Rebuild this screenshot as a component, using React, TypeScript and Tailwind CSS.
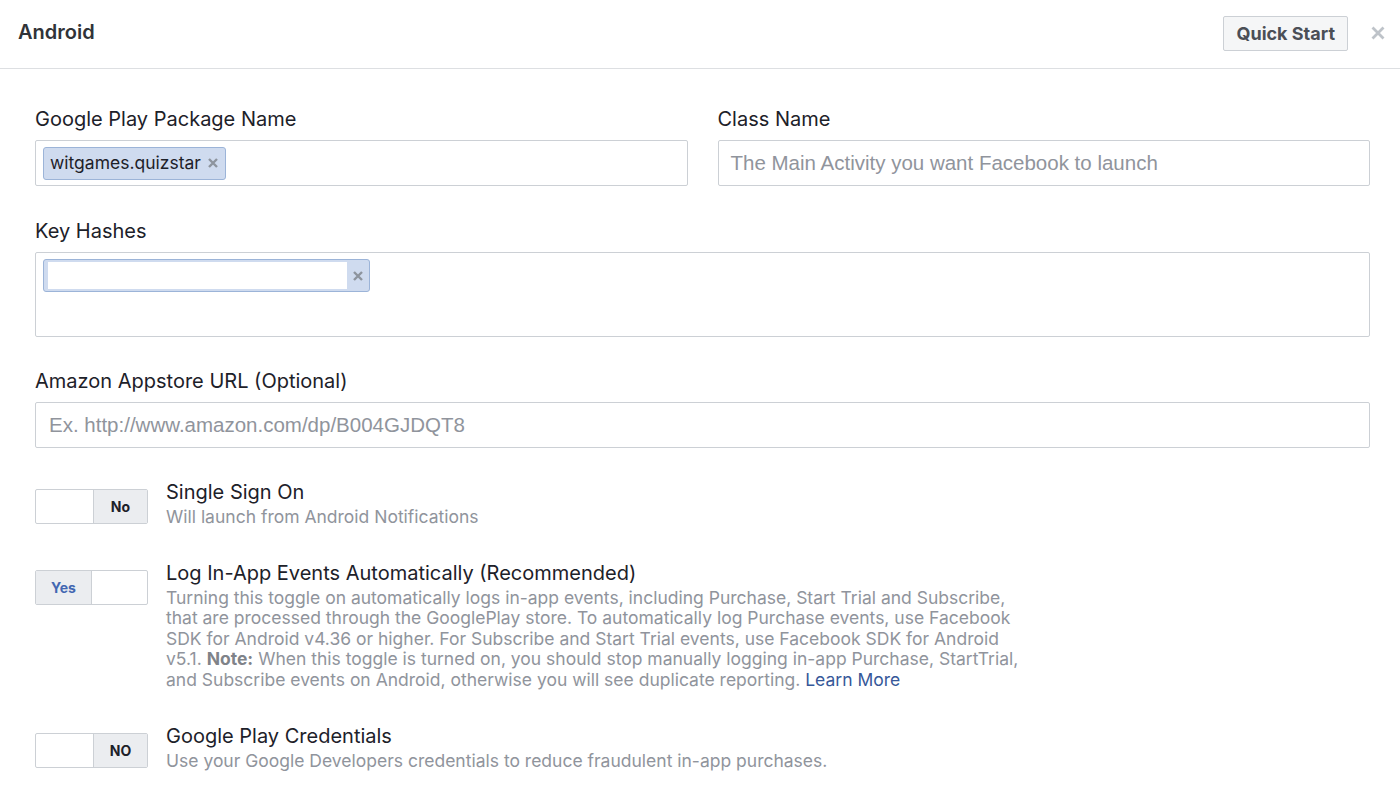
import React from "react";

const ui = "font-['Inter','Noto_Sans',sans-serif]";
const helv = "font-['Liberation_Sans','Arial',sans-serif]";

function Label({ children }: { children: React.ReactNode }) {
  return <div className={`text-[20px] leading-[24px] text-[#1d2129] mb-[9px] ${ui}`}>{children}</div>;
}

function SmallX() {
  return (
    <svg viewBox="0 0 12 12" width="12" height="12" className="text-[#8d949e]">
      <path d="M2 2 L10 10 M10 2 L2 10" stroke="currentColor" strokeWidth="2.4" />
    </svg>
  );
}

function Toggle({ on, label }: { on: boolean; label: string }) {
  return (
    <div className="flex w-[113px] h-[35px] shrink-0 border border-[#ccd0d5] rounded-[2px] overflow-hidden bg-white">
      {on ? (
        <>
          <div className={`w-[56px] flex items-center justify-center bg-[#ebedf0] border-r border-[#ccd0d5] text-[14px] font-bold text-[#4267b2] ${ui}`}>
            {label}
          </div>
          <div className="flex-1" />
        </>
      ) : (
        <>
          <div className="w-[58px] border-r border-[#ccd0d5]" />
          <div className={`flex-1 flex items-center justify-center bg-[#ebedf0] text-[14px] font-bold text-[#1d2129] ${ui}`}>
            {label}
          </div>
        </>
      )}
    </div>
  );
}

function Setting({
  on,
  label,
  title,
  children,
}: {
  on: boolean;
  label: string;
  title: string;
  children: React.ReactNode;
}) {
  return (
    <div className="flex items-start gap-[18px]">
      <Toggle on={on} label={label} />
      <div className={`${ui} -mt-[12px]`}>
        <div className="text-[20px] leading-[30px] text-[#1d2129]">{title}</div>
        <div className="text-[17.5px] leading-[20.6px] text-[#90949c] max-w-[870px]">{children}</div>
      </div>
    </div>
  );
}

export default function App() {
  return (
    <div className="w-[1400px] h-[797px] bg-white overflow-hidden">
      <div className="h-[69px] border-b border-[#dddfe2] flex items-center pl-[18px] pr-[12px]">
        <div className={`text-[20px] font-semibold text-[#303338] flex-1 -mt-[4px] ${ui}`}>Android</div>
        <button
          className={`h-[35px] px-[12px] border border-[#ccd0d5] bg-[#f5f6f7] rounded-[2px] text-[18px] font-bold text-[#4b4f56] -mt-[2px] ml-[1px] ${ui}`}
        >
          Quick Start
        </button>
        <div className="w-[18px] ml-[22px] -mt-[2px] text-[#bec3c9]">
          <svg viewBox="0 0 16 16" width="16" height="16">
            <path d="M2.5 2.5 L13.5 13.5 M13.5 2.5 L2.5 13.5" stroke="currentColor" strokeWidth="2.8" />
          </svg>
        </div>
      </div>

      <div className="px-[35px] pr-[30px] pt-[38px]">
        <div className="grid grid-cols-2 gap-x-[30px]">
          <div>
            <Label>Google Play Package Name</Label>
            <div className="h-[46px] border border-[#ccd0d5] rounded-[2px] flex items-center px-[7px]">
              <div className="h-[33px] flex items-center gap-[6px] pl-[6px] pr-[6px] bg-[#cfdbef] border border-[#9cb4d8] rounded-[3px]">
                <span className={`text-[17.5px] text-[#1d2129] ${ui}`}>witgames.quizstar</span>
                <SmallX />
              </div>
            </div>
          </div>
          <div>
            <Label>Class Name</Label>
            <div className="h-[46px] border border-[#ccd0d5] rounded-[2px] flex items-center px-[12px]">
              <span className={`text-[20.5px] text-[#90949c] ${helv}`}>The Main Activity you want Facebook to launch</span>
            </div>
          </div>
        </div>

        <div className="mt-[33px]">
          <Label>Key Hashes</Label>
          <div className="h-[85px] border border-[#ccd0d5] rounded-[2px] px-[7px] pt-[6px]">
            <div className="w-[327px] h-[33px] flex border border-[#9cb4d8] rounded-[3px] bg-[#cfdbef] overflow-hidden">
              <div className="flex-1 bg-white ml-[4px] my-[2px]" />
              <div className="w-[22px] flex items-center justify-center">
                <SmallX />
              </div>
            </div>
          </div>
        </div>

        <div className="mt-[32px]">
          <Label>Amazon Appstore URL (Optional)</Label>
          <div className="h-[46px] border border-[#ccd0d5] rounded-[2px] flex items-center px-[13px]">
            <span className={`text-[20.5px] text-[#90949c] ${helv}`}>Ex. http://www.amazon.com/dp/B004GJDQT8</span>
          </div>
        </div>

        <div className="mt-[41px] flex flex-col gap-[42px]">
          <Setting on={false} label="No" title="Single Sign On">
            Will launch from Android Notifications
          </Setting>
          <Setting on={true} label="Yes" title="Log In-App Events Automatically (Recommended)">
            Turning this toggle on automatically logs in-app events, including Purchase, Start Trial and Subscribe,
            that are processed through the GooglePlay store. To automatically log Purchase events, use Facebook
            SDK for Android v4.36 or higher. For Subscribe and Start Trial events, use Facebook SDK for Android
            v5.1. <span className="font-bold text-[#7f8389]">Note:</span> When this toggle is turned on, you should
            stop manually logging in-app Purchase, StartTrial, and Subscribe events on Android, otherwise you will see
            duplicate reporting. <span className="text-[#365899]">Learn More</span>
          </Setting>
          <Setting on={false} label="NO" title="Google Play Credentials">
            Use your Google Developers credentials to reduce fraudulent in-app purchases.
          </Setting>
        </div>
      </div>
    </div>
  );
}
